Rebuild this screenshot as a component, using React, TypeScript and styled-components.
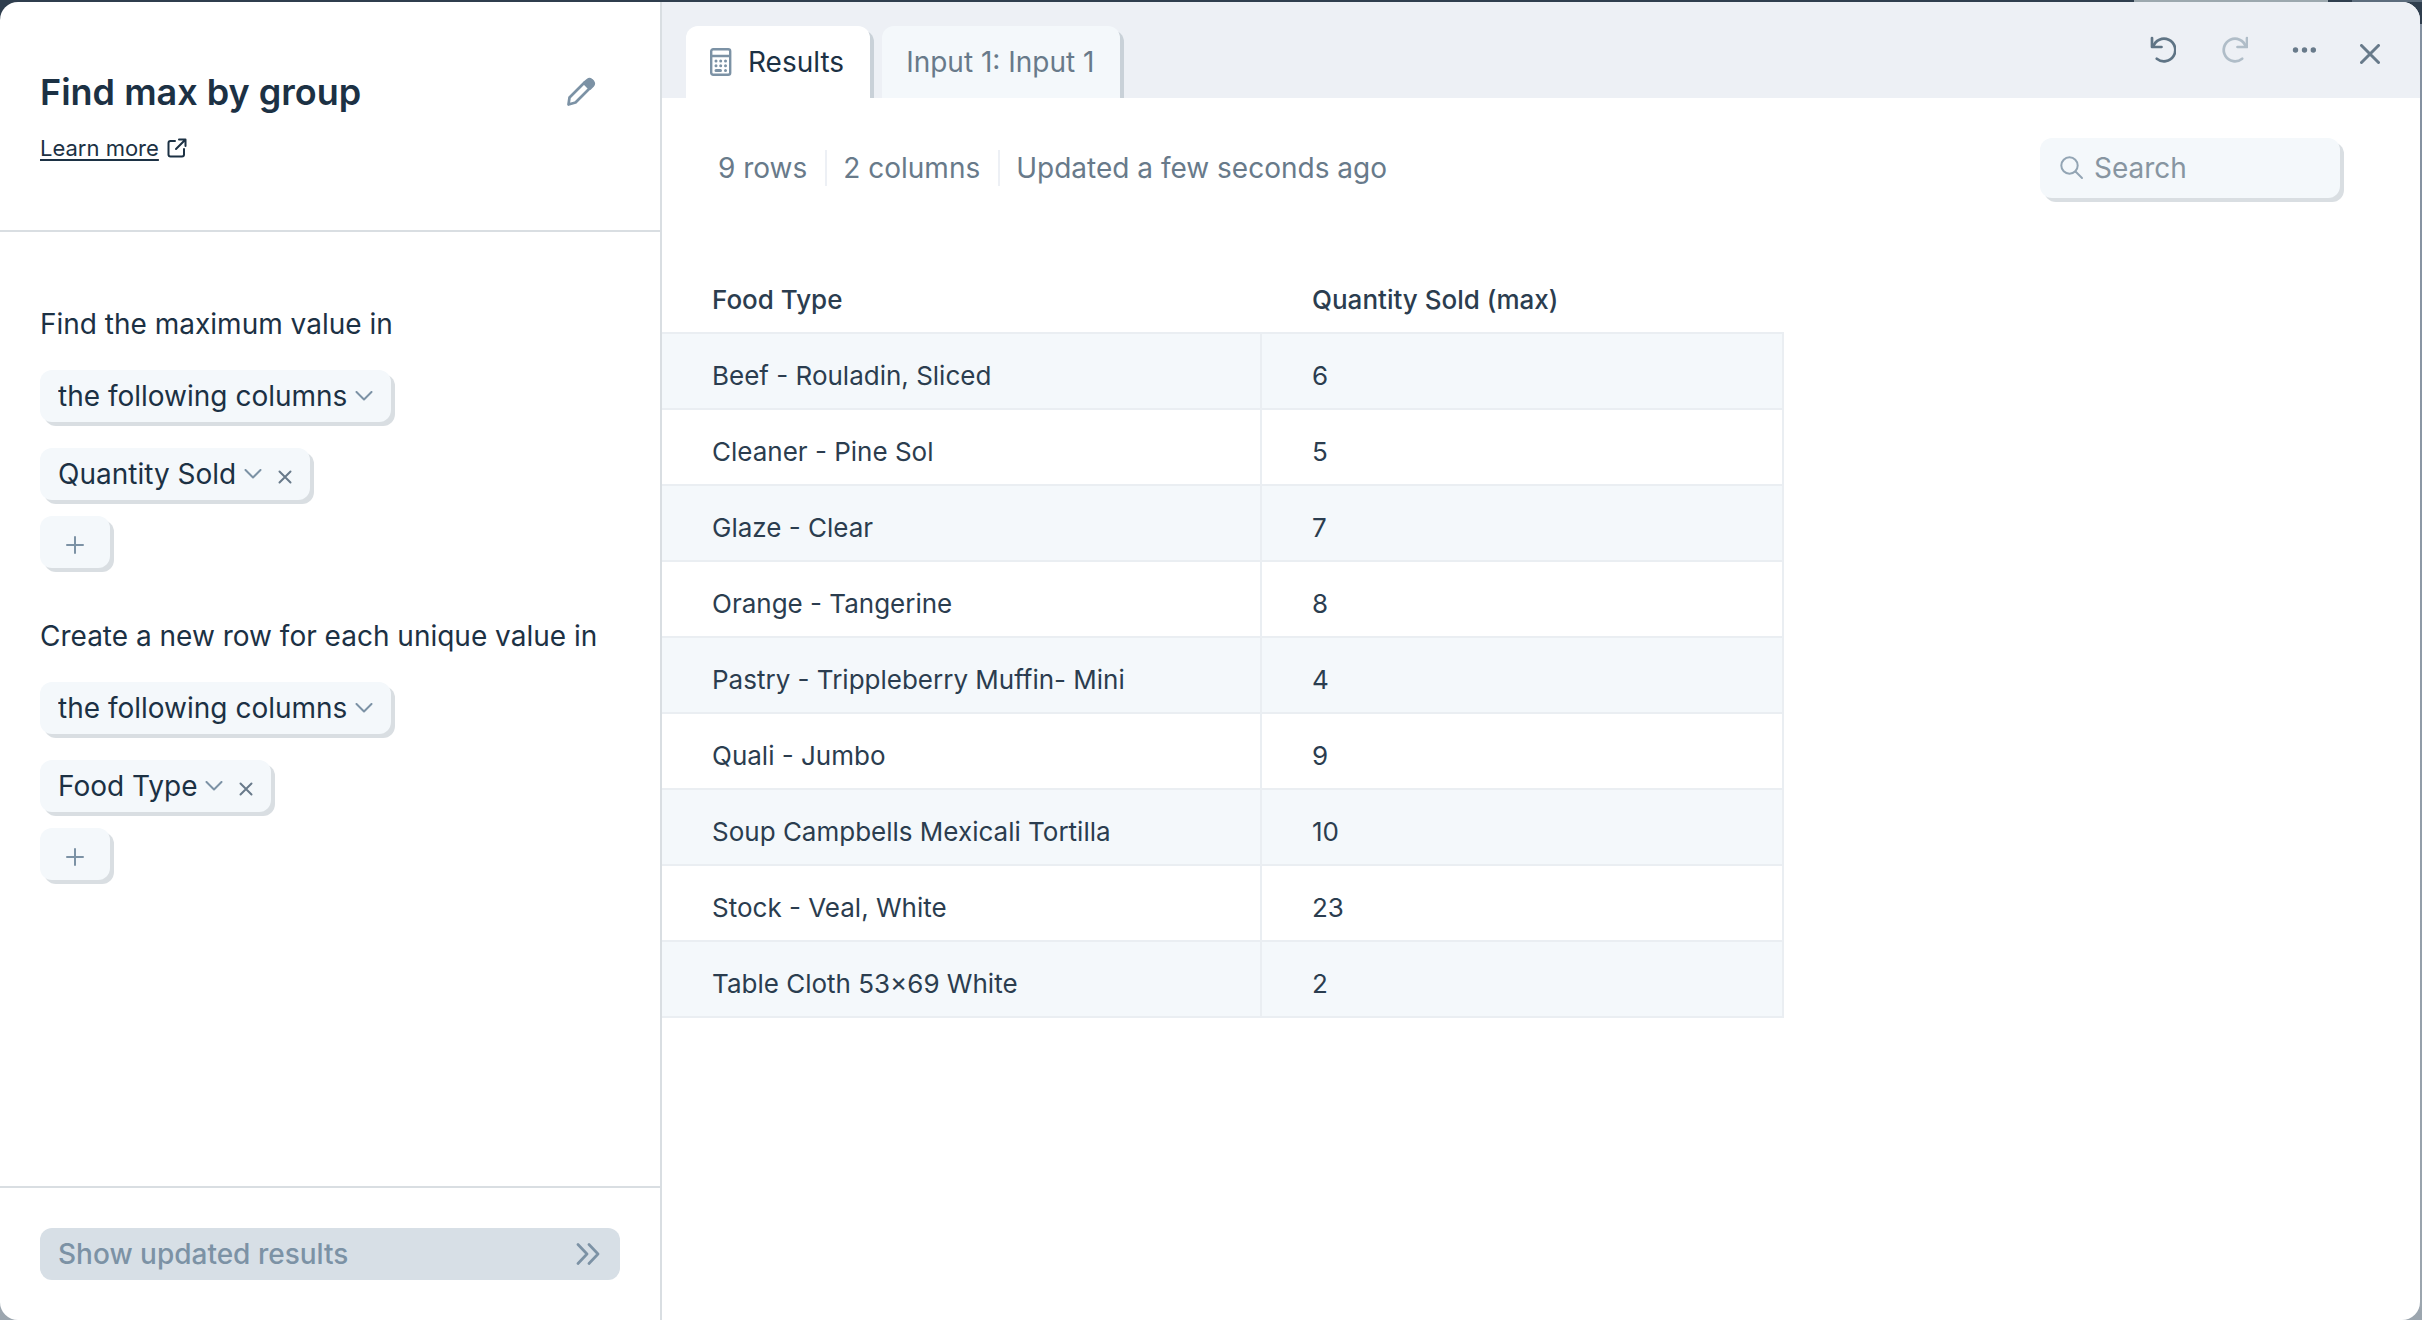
import React, { useState } from "react";
import styled, { createGlobalStyle } from "styled-components";

const ink = "#1c3144";
const cellInk = "#2b3d4f";
const muted = "#687a8a";
const steel = "#7c92a5";
const line = "#d9dee2";
const pale = "#f4f8fb";
const hair = "#eaeef2";

const GlobalStyle = createGlobalStyle`
  *, *::before, *::after { box-sizing: border-box; }
  body {
    margin: 0;
    background: #2f3e4e;
    font-family: Inter, "Liberation Sans", sans-serif;
    color: ${ink};
  }
  button, input, select { font: inherit; color: inherit; margin: 0; }
  button { padding: 0; border: 0; background: none; cursor: pointer; }
`;

const Backdrop = styled.div`
  min-height: 100vh;
  display: grid;
  grid-template-rows: 2px 1fr;
  background: linear-gradient(#2f3e4e 24px, #8390a0 24px, #9ca6af);
`;

const BehindBar = styled.div`
  display: flex;
  justify-content: flex-end;
  gap: 24px;
`;

const BehindItem = styled.span<{ $width: number; $tone: string }>`
  width: ${(p) => p.$width}px;
  background: ${(p) => p.$tone};
`;

const Modal = styled.div`
  display: grid;
  grid-template-columns: 662px minmax(0, 1fr);
  margin-right: 2px;
  border-radius: 18px;
  background: #fff;
  overflow: hidden;
`;

const Sidebar = styled.aside`
  display: flex;
  flex-direction: column;
  border-right: 2px solid ${line};
`;

const SidebarHeader = styled.header`
  height: 230px;
  padding: 64px 64px 0 40px;
  border-bottom: 2px solid ${line};
`;

const TitleRow = styled.div`
  display: flex;
  align-items: center;
  justify-content: space-between;
`;

const Title = styled.h1`
  margin: 0;
  font-size: 36px;
  line-height: 52px;
  font-weight: 600;
`;

const LearnMore = styled.a`
  display: inline-flex;
  align-items: center;
  gap: 8px;
  margin-top: 14px;
  font-size: 22px;
  line-height: 32px;
  color: ${ink};
  text-decoration: none;
`;

const LinkText = styled.span`
  text-decoration: underline;
  text-decoration-thickness: 2px;
  text-underline-offset: 3px;
`;

const SidebarBody = styled.div`
  flex: 1;
  padding: 72px 40px;
  display: flex;
  flex-direction: column;
  gap: 48px;
`;

const Group = styled.section`
  display: flex;
  flex-direction: column;
  align-items: flex-start;
`;

const GroupTitle = styled.h2`
  margin: 0 0 26px;
  font-size: 28px;
  line-height: 40px;
  font-weight: 400;
  white-space: nowrap;
`;

const Chips = styled.div`
  display: flex;
  flex-direction: column;
  align-items: flex-start;
  gap: 16px;
  margin-top: 26px;
`;

const Chip = styled.div`
  display: flex;
  align-items: center;
  gap: 16px;
  height: 52px;
  padding: 0 18px;
  border-radius: 12px;
  background: ${pale};
  box-shadow: 4px 4px 0 ${line};
`;

const SelectWrap = styled.label`
  display: grid;
  align-items: center;

  > * { grid-area: 1 / 1; }
  > svg { justify-self: end; pointer-events: none; }
`;

const Select = styled.select`
  appearance: none;
  border: 0;
  background: none;
  padding: 0 25px 0 0;
  font-size: 28px;
  line-height: 40px;
  height: 52px;
  cursor: pointer;
`;

const IconButton = styled.button`
  display: grid;
  place-items: center;

  &:disabled { cursor: default; }
`;

const RemoveButton = styled(IconButton)`
  padding-top: 6px;
`;

const CloseButton = styled(IconButton)`
  padding-top: 8px;
`;

const AddButton = styled.button`
  display: grid;
  place-items: center;
  width: 70px;
  height: 52px;
  border-radius: 12px;
  background: ${pale};
  box-shadow: 4px 4px 0 ${line};
`;

const SidebarFooter = styled.footer`
  height: 134px;
  padding: 40px;
  border-top: 2px solid ${line};
`;

const ShowButton = styled.button`
  display: flex;
  align-items: center;
  justify-content: space-between;
  width: 100%;
  height: 52px;
  padding: 0 20px 0 18px;
  border-radius: 12px;
  background: #d7dfe6;
  color: ${steel};
  font-size: 28px;
  line-height: 40px;
  font-weight: 500;
`;

const Main = styled.main`
  display: flex;
  flex-direction: column;
`;

const TopBar = styled.header`
  display: flex;
  justify-content: space-between;
  height: 96px;
  padding: 24px 40px 0 24px;
  background: #edf0f5;
  overflow: hidden;
`;

const Tabs = styled.div`
  display: flex;
  gap: 12px;
`;

const Tab = styled.button<{ $active?: boolean }>`
  display: flex;
  align-items: center;
  gap: 16px;
  height: 72px;
  padding: 0 26px 0 24px;
  border-radius: 12px 12px 0 0;
  background: ${(p) => (p.$active ? "#fff" : pale)};
  box-shadow: 4px 4px 0 #c9d1d8;
  font-size: 28px;
  line-height: 40px;
  color: ${(p) => (p.$active ? ink : muted)};
`;

const Actions = styled.div`
  display: flex;
  align-items: center;
  gap: 44px;
  height: 48px;
`;

const InfoBar = styled.div`
  display: flex;
  align-items: center;
  justify-content: space-between;
  padding: 40px 80px 0 40px;
`;

const Stats = styled.ul`
  display: flex;
  margin: 0;
  padding: 0;
  list-style: none;
  font-size: 28px;
  line-height: 36px;
  color: ${muted};
`;

const Stat = styled.li`
  padding: 0 18px 0 16px;

  & + & { border-left: 2px solid #edf0f5; }
`;

const SearchBox = styled.label`
  display: flex;
  align-items: center;
  gap: 10px;
  width: 300px;
  height: 60px;
  padding: 0 20px;
  border-radius: 12px;
  background: ${pale};
  box-shadow: 4px 4px 0 ${line};
`;

const SearchInput = styled.input`
  flex: 1;
  min-width: 0;
  padding: 0;
  border: 0;
  outline: 0;
  background: none;
  font-size: 28px;
  line-height: 40px;

  &::placeholder { color: #8795a1; opacity: 1; }
`;

const Table = styled.table`
  width: 1122px;
  margin-top: 68px;
  border-collapse: separate;
  border-spacing: 0;
  table-layout: fixed;
  font-size: 26px;
  line-height: 36px;
  color: ${cellInk};
`;

const Th = styled.th`
  height: 68px;
  padding: 2px 50px 0;
  border-bottom: 2px solid ${hair};
  text-align: left;
  font-weight: 500;

  &:first-child { width: 600px; }
`;

const Td = styled.td`
  height: 76px;
  padding: 10px 50px 0;
  border-right: 2px solid ${hair};
  border-bottom: 2px solid ${hair};
  white-space: nowrap;

  tr:nth-child(odd) > & { background: ${pale}; }
`;

const Chevron = () => (
  <svg width="18" height="10" viewBox="0 0 18 10" fill="none" stroke={steel} strokeWidth="2" strokeLinecap="round" strokeLinejoin="round" aria-hidden="true">
    <path d="M1.5 1 9 8.500 16.500 1" />
  </svg>
);

const Cross = ({ size, width, tone }: { size: number; width: number; tone: string }) => (
  <svg width={size} height={size} viewBox={`0 0 ${size} ${size}`} fill="none" stroke={tone} strokeWidth={width} strokeLinecap="round" aria-hidden="true">
    <path d={`M1.500 1.500 ${size - 1.5} ${size - 1.5}M${size - 1.5} 1.500 1.500 ${size - 1.5}`} />
  </svg>
);

const Plus = () => (
  <svg width="20" height="26" viewBox="0 0 20 26" fill="none" stroke={steel} strokeWidth="2" strokeLinecap="round" aria-hidden="true">
    <path d="M10 8V24M2 16H18" />
  </svg>
);

const Pencil = () => (
  <svg width="30" height="30" viewBox="0 0 30 30" fill="none" stroke={steel} strokeWidth="2.700" strokeLinejoin="round" aria-hidden="true">
    <path d="M2.500 27.500 3.500 20.500 18 6 23.500 11.500 9.500 25.500Z" />
    <path fill={steel} d="M18.500 5.500 21.500 3Q23.500 1.500 25.500 3L27 4.500Q28.500 6.500 27 8.500L24 11.500Z" />
  </svg>
);

const External = () => (
  <svg width="20" height="20" viewBox="0 0 20 20" fill="none" stroke={ink} strokeWidth="2" strokeLinecap="round" strokeLinejoin="round" aria-hidden="true">
    <path d="M8 3H3.500Q1.500 3 1.500 5V16.500Q1.500 18.500 3.500 18.500H15Q17 18.500 17 16.500V11M12 1.500H18.500V8M18 2 9 11" />
  </svg>
);

const DoubleChevron = () => (
  <svg width="24" height="22" viewBox="0 0 24 22" fill="none" stroke={steel} strokeWidth="2.700" strokeLinecap="round" strokeLinejoin="round" aria-hidden="true">
    <path d="M2 1.500 11 11 2 20.500M13 1.500 22 11 13 20.500" />
  </svg>
);

const Calculator = () => (
  <svg width="22" height="28" viewBox="0 0 22 28" fill="none" stroke={steel} strokeWidth="2.400" aria-hidden="true">
    <rect x="1.200" y="1.200" width="19" height="25.600" rx="2" />
    <path d="M1 8H20" />
    <path strokeWidth="3" strokeLinecap="round" d="M6 13H6.010M10.700 13H10.710M15.500 13H15.510M6 17.800H6.010M10.700 17.800H10.710M15.500 17.800H15.510M6 22.500H10.500M15.500 22.500H15.510" />
  </svg>
);

const Undo = ({ tone, flip }: { tone: string; flip?: boolean }) => (
  <svg width="28" height="28" viewBox="0 0 28 28" fill="none" stroke={tone} strokeWidth="2.700" strokeLinecap="round" strokeLinejoin="round" aria-hidden="true">
    <g transform={flip ? "matrix(-1 0 0 1 30 0)" : "translate(1 0)"}>
      <path d="M3 2V11H12.500" />
      <path d="M4.200 10.600A11.300 11.300 0 1 1 7.800 22.700" />
    </g>
  </svg>
);

const Dots = () => (
  <svg width="24" height="6" viewBox="0 0 24 6" fill={muted} aria-hidden="true">
    <circle cx="3.500" cy="3" r="2.700" />
    <circle cx="12.500" cy="3" r="2.700" />
    <circle cx="21.300" cy="3" r="2.700" />
  </svg>
);

const Magnifier = () => (
  <svg width="24" height="24" viewBox="0 0 24 24" fill="none" stroke="#93a5b4" strokeWidth="2" strokeLinecap="round" aria-hidden="true">
    <circle cx="9.500" cy="9.500" r="8.200" />
    <path d="M15.500 15.500 22 22" />
  </svg>
);

const rows: [string, number][] = [
  ["Beef - Rouladin, Sliced", 6],
  ["Cleaner - Pine Sol", 5],
  ["Glaze - Clear", 7],
  ["Orange - Tangerine", 8],
  ["Pastry - Trippleberry Muffin- Mini", 4],
  ["Quali - Jumbo", 9],
  ["Soup Campbells Mexicali Tortilla", 10],
  ["Stock - Veal, White", 23],
  ["Table Cloth 53×69 White", 2],
];

const groups = [
  { title: "Find the maximum value in", column: "Quantity Sold" },
  { title: "Create a new row for each unique value in", column: "Food Type" },
];

const Picker = ({ label, value }: { label: string; value: string }) => (
  <SelectWrap>
    <Select aria-label={label} defaultValue={value}>
      <option>{value}</option>
    </Select>
    <Chevron />
  </SelectWrap>
);

export default function App() {
  const [query, setQuery] = useState("");
  const shown = rows.filter(([name]) => name.toLowerCase().includes(query.toLowerCase()));

  return (
    <>
      <GlobalStyle />
      <Backdrop>
        <BehindBar>
          <BehindItem $width={194} $tone="#9ca8ae" />
          <BehindItem $width={70} $tone="#5c6c7c" />
        </BehindBar>
        <Modal role="dialog" aria-labelledby="step-title">
          <Sidebar>
            <SidebarHeader>
              <TitleRow>
                <Title id="step-title">Find max by group</Title>
                <IconButton aria-label="Rename"><Pencil /></IconButton>
              </TitleRow>
              <LearnMore href="#learn-more">
                <LinkText>Learn more</LinkText>
                <External />
              </LearnMore>
            </SidebarHeader>
            <SidebarBody>
              {groups.map((g) => (
                <Group key={g.column}>
                  <GroupTitle>{g.title}</GroupTitle>
                  <Chip>
                    <Picker label={g.title} value="the following columns" />
                  </Chip>
                  <Chips>
                    <Chip>
                      <Picker label="Column" value={g.column} />
                      <RemoveButton aria-label={`Remove ${g.column}`}>
                        <Cross size={14} width={2} tone={muted} />
                      </RemoveButton>
                    </Chip>
                    <AddButton aria-label="Add column"><Plus /></AddButton>
                  </Chips>
                </Group>
              ))}
            </SidebarBody>
            <SidebarFooter>
              <ShowButton>
                Show updated results
                <DoubleChevron />
              </ShowButton>
            </SidebarFooter>
          </Sidebar>
          <Main>
            <TopBar>
              <Tabs role="tablist">
                <Tab role="tab" aria-selected="true" $active>
                  <Calculator />
                  Results
                </Tab>
                <Tab role="tab" aria-selected="false">Input 1: Input 1</Tab>
              </Tabs>
              <Actions>
                <IconButton aria-label="Undo"><Undo tone="#5f7485" /></IconButton>
                <IconButton aria-label="Redo" disabled><Undo tone="#b0bdc8" flip /></IconButton>
                <IconButton aria-label="More options"><Dots /></IconButton>
                <CloseButton aria-label="Close"><Cross size={20} width={3} tone={muted} /></CloseButton>
              </Actions>
            </TopBar>
            <InfoBar>
              <Stats>
                <Stat>9 rows</Stat>
                <Stat>2 columns</Stat>
                <Stat>Updated a few seconds ago</Stat>
              </Stats>
              <SearchBox>
                <Magnifier />
                <SearchInput
                  type="text"
                  aria-label="Search"
                  placeholder="Search"
                  value={query}
                  onChange={(e) => setQuery(e.target.value)}
                />
              </SearchBox>
            </InfoBar>
            <Table>
              <thead>
                <tr>
                  <Th scope="col">Food Type</Th>
                  <Th scope="col">Quantity Sold (max)</Th>
                </tr>
              </thead>
              <tbody>
                {shown.map(([name, max]) => (
                  <tr key={name}>
                    <Td>{name}</Td>
                    <Td>{max}</Td>
                  </tr>
                ))}
              </tbody>
            </Table>
          </Main>
        </Modal>
      </Backdrop>
    </>
  );
}
